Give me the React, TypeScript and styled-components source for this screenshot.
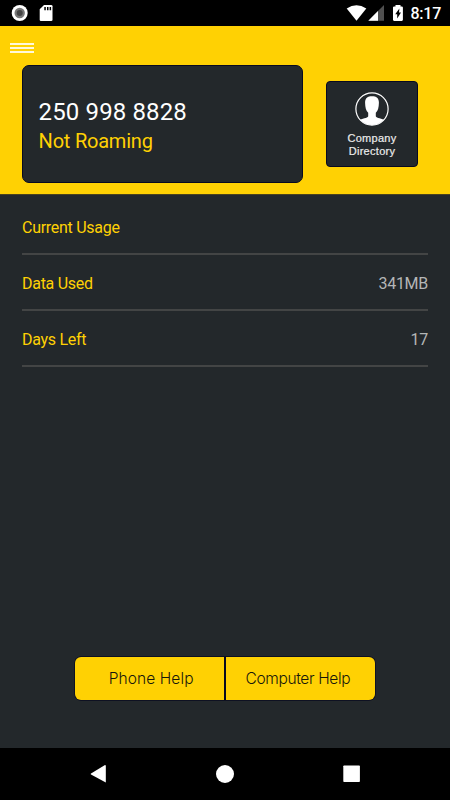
import React from 'react';
import styled, { createGlobalStyle } from 'styled-components';

const yellow = '#ffd103';
const dark = '#23282b';
const edge = '#080a20';

const GlobalStyle = createGlobalStyle`
  * { box-sizing: border-box; }
  body { margin: 0; background: #000; }
  button { font: inherit; border: 0; padding: 0; margin: 0; background: none; }
`;

const Screen = styled.div`
  width: 450px;
  height: 800px;
  display: flex;
  flex-direction: column;
  overflow: hidden;
  background: ${dark};
  font-family: Roboto, sans-serif;
`;

const StatusBar = styled.div`
  height: 26px;
  flex: none;
  display: flex;
  align-items: center;
  justify-content: space-between;
  background: #000;
  color: #fff;
`;

const StatusRight = styled.div`
  display: flex;
  align-items: center;
  padding-right: 9px;
`;

const Clock = styled.span`
  font-size: 16px;
  font-weight: 500;
  line-height: 26px;
  letter-spacing: -0.25px;
  padding-top: 2px;
  padding-left: 1px;
`;

const Header = styled.header`
  height: 169px;
  flex: none;
  display: flex;
  flex-direction: column;
  background: ${yellow};
  border-bottom: 1px solid #4a431f;
`;

const MenuButton = styled.button`
  width: 24px;
  height: 10px;
  flex: none;
  margin: 17px 0 0 10px;
  display: flex;
  flex-direction: column;
  justify-content: space-between;
`;

const MenuLine = styled.span`
  width: 24px;
  height: 2px;
  background: #fff8dc;
`;

const Cards = styled.div`
  display: flex;
  align-items: flex-start;
  gap: 23px;
  padding: 12px 0 0 22px;
`;

const NumberCard = styled.section`
  width: 281px;
  height: 118px;
  padding: 30px 0 0 15.6px;
  border: 1px solid ${edge};
  border-radius: 7px;
  background: ${dark};
`;

const PhoneNumber = styled.div`
  font-size: 24px;
  line-height: 32px;
  letter-spacing: 0.13px;
  color: #fff;
`;

const Roaming = styled.div`
  font-size: 20px;
  line-height: 26px;
  letter-spacing: -0.22px;
  color: ${yellow};
`;

const DirectoryButton = styled.button`
  width: 92px;
  height: 86px;
  margin-top: 16px;
  padding-top: 9.5px;
  display: flex;
  flex-direction: column;
  align-items: center;
  border: 1px solid ${edge};
  border-radius: 4px;
  background: ${dark};
`;

const DirectoryLabel = styled.span`
  margin-top: 6.5px;
  font-family: "Liberation Sans", Arial, sans-serif;
  font-size: 11px;
  line-height: 13px;
  letter-spacing: 0.3px;
  color: #ececec;
  -webkit-text-stroke: 0.2px #ececec;
  text-align: center;
`;

const UsageList = styled.main`
  flex: 1;
  padding: 4px 22px 0;
`;

const UsageRow = styled.div`
  height: 56px;
  display: flex;
  align-items: center;
  justify-content: space-between;
  padding-top: 2px;
  border-bottom: 2px solid #434545;
  font-size: 16px;
  letter-spacing: -0.28px;
`;

const UsageLabel = styled.span`
  color: ${yellow};
`;

const UsageValue = styled.span`
  color: #b4b6b6;
`;

const HelpBar = styled.footer`
  height: 43px;
  flex: none;
  display: grid;
  grid-template-columns: 149px 149px;
  gap: 2px;
  margin: 0 75px 48px;
  border-radius: 6px;
  background: ${edge};
  box-shadow: 0 0 0 0.7px ${edge};
  overflow: hidden;
`;

const HelpButton = styled.button<{ $start: number; $spacing: number }>`
  background: ${yellow};
  color: #17170b;
  font-family: Inter, sans-serif;
  font-weight: 300;
  font-size: 15.5px;
  text-align: left;
  white-space: nowrap;
  letter-spacing: ${(p) => p.$spacing}px;
  padding-left: ${(p) => p.$start}px;
  padding-bottom: 1px;
`;

const NavBar = styled.nav`
  height: 52px;
  flex: none;
  background: #000;
`;

function StatusIcons() {
  return (
    <svg width="60" height="26" viewBox="0 0 60 26">
      <circle cx="19.7" cy="13" r="8" fill="#fff" />
      <circle cx="19.7" cy="13" r="5.2" fill="#777" />
      <circle cx="19.7" cy="13" r="3" fill="#444" />
      <path d="M44 5h7.2q1.3 0 1.3 1.3v13.4q0 1.3-1.3 1.3H41q-1.3 0-1.3-1.3V9.3z" fill="#fff" />
      <path d="M44.3 7h1.5v3.3h-1.5zM47 7h1.5v3.3H47zM49.6 7h1.5v3.3h-1.5z" fill="#000" />
    </svg>
  );
}

function SystemIcons() {
  return (
    <svg width="65" height="26" viewBox="345 0 65 26">
      <path d="M346.7 8.6Q356.5 1.9 366.3 8.6L356.5 20.8z" fill="#fff" />
      <path d="M368.3 20.8L384 5v15.8z" fill="#505050" />
      <path d="M368.3 20.8L378 11v9.8z" fill="#fff" />
      <path
        d="M395.5 5h5v1.4h1.3q1.1 0 1.1 1.1v12.3q0 1.1-1.1 1.1h-7.7q-1.1 0-1.1-1.1V7.5q0-1.1 1.1-1.1h1.4z"
        fill="#fff"
      />
      <path d="M399.4 8.5L395.2 14.2H397.2V18.5L401 12.5H399z" fill="#000" />
    </svg>
  );
}

function PersonIcon() {
  return (
    <svg width="34" height="34" viewBox="0 0 34 34">
      <defs>
        <clipPath id="person-ring">
          <circle cx="17" cy="17" r="16" />
        </clipPath>
      </defs>
      <path
        clipPath="url(#person-ring)"
        d="M17 4.3C12.5 4.3 9.9 6.3 10.1 11C10.2 15.5 10.9 18.5 13.2 20.8V24.3C12.5 26.3 7 26.3 3.5 28.5V34H30.5V28.5C27 26.3 21.5 26.3 20.8 24.3V20.8C23.1 18.5 23.8 15.5 23.9 11C24.1 6.3 21.5 4.3 17 4.3z"
        fill="#fff"
      />
      <circle cx="17" cy="17" r="16.1" fill="none" stroke="#fff" strokeWidth="1.2" />
    </svg>
  );
}

const usage = [
  { label: 'Current Usage', value: '' },
  { label: 'Data Used', value: '341MB' },
  { label: 'Days Left', value: '17' },
];

export default function App() {
  return (
    <Screen>
      <GlobalStyle />
      <StatusBar>
        <StatusIcons />
        <StatusRight>
          <SystemIcons />
          <Clock>8:17</Clock>
        </StatusRight>
      </StatusBar>
      <Header>
        <MenuButton aria-label="Menu">
          <MenuLine />
          <MenuLine />
          <MenuLine />
        </MenuButton>
        <Cards>
          <NumberCard>
            <PhoneNumber>250 998 8828</PhoneNumber>
            <Roaming>Not Roaming</Roaming>
          </NumberCard>
          <DirectoryButton>
            <PersonIcon />
            <DirectoryLabel>
              Company
              <br />
              Directory
            </DirectoryLabel>
          </DirectoryButton>
        </Cards>
      </Header>
      <UsageList>
        {usage.map((row) => (
          <UsageRow key={row.label}>
            <UsageLabel>{row.label}</UsageLabel>
            <UsageValue>{row.value}</UsageValue>
          </UsageRow>
        ))}
      </UsageList>
      <HelpBar>
        <HelpButton $start={33.7} $spacing={0.1}>Phone Help</HelpButton>
        <HelpButton $start={19.5} $spacing={-0.35}>Computer Help</HelpButton>
      </HelpBar>
      <NavBar>
        <svg width="450" height="52" viewBox="0 748 450 52" fill="#fff">
          <path d="M105.8 765.5V782.5L91 774.4Q90.2 773.9 91 773.4L105 765z" />
          <circle cx="225" cy="774" r="9" />
          <rect x="343.3" y="765.5" width="16.6" height="16.6" rx="0.8" />
        </svg>
      </NavBar>
    </Screen>
  );
}
